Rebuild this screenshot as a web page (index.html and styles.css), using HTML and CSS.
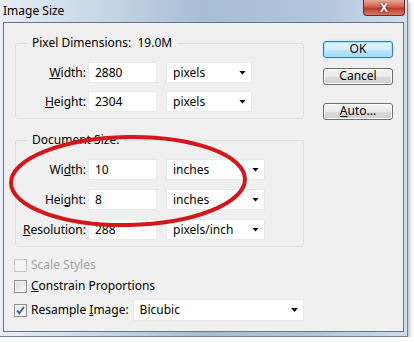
FILE: index.html
```html
<!DOCTYPE html>
<html lang="en">
<head>
  <meta charset="UTF-8" />
  <meta name="viewport" content="width=device-width, initial-scale=1.0" />
  <title>Image Size</title>
  <link rel="stylesheet" href="styles.css">
</head>
<body>
  <div class="window">
    <div class="titlebar">
      <span class="title">Image Size</span>
      <span class="close">X</span>
    </div>

    <div class="client">
      <div class="main">
        <fieldset class="group">
          <legend>Pixel Dimensions:&nbsp; 19.0M</legend>
          <div class="rows tight">
            <div class="row">
              <span class="lbl"><u>W</u>idth:</span>
              <span class="field">2880</span>
              <span class="dropdown short">pixels<i class="arrow"></i></span>
            </div>
            <div class="row">
              <span class="lbl"><u>H</u>eight:</span>
              <span class="field">2304</span>
              <span class="dropdown short">pixels<i class="arrow"></i></span>
            </div>
          </div>
        </fieldset>

        <fieldset class="group second">
          <legend>Document Size:</legend>
          <div class="rows">
            <div class="row">
              <span class="lbl">Wi<u>d</u>th:</span>
              <span class="field">10</span>
              <span class="dropdown">inches<i class="arrow"></i></span>
            </div>
            <div class="row">
              <span class="lbl">Hei<u>g</u>ht:</span>
              <span class="field">8</span>
              <span class="dropdown">inches<i class="arrow"></i></span>
            </div>
            <div class="row">
              <span class="lbl"><u>R</u>esolution:</span>
              <span class="field">288</span>
              <span class="dropdown">pixels/inch<i class="arrow"></i></span>
            </div>
          </div>
        </fieldset>

        <div class="check disabled first"><span class="box"></span>Scale Styles</div>
        <div class="check"><span class="box"></span><u>C</u>onstrain Proportions</div>
        <div class="check resample">
          <span class="box checked">
            <svg width="11" height="11" viewBox="0 0 11 11"><path d="M2 5.5 L4.3 8.2 L9 2" fill="none" stroke="#3d5a9c" stroke-width="1.8"/></svg>
          </span>
          <span class="resample-label">Resample <u>I</u>mage:</span>
          <span class="dropdown wide">Bicubic<i class="arrow"></i></span>
        </div>
      </div>

      <div class="buttons">
        <span class="btn default">OK</span>
        <span class="btn">Cancel</span>
        <span class="btn auto"><u>A</u>uto...</span>
      </div>
    </div>

    <svg class="markup" width="414" height="342" viewBox="0 0 414 342">
      <ellipse cx="128" cy="181" rx="117" ry="44" transform="rotate(-1 128 181)" fill="none" stroke="#d3171b" stroke-width="4"/>
    </svg>
  </div>
</body>
</html>
```

FILE: styles.css
```css
body {
  margin: 0;
  background: #fff;
  font-family: "Noto Sans", sans-serif;
  font-size: 12px;
  line-height: 16px;
  color: #000;
}

.window {
  position: relative;
  width: 408px;
  height: 337px;
  box-sizing: border-box;
  background: linear-gradient(to right, #e7eef6 0%, #cbd9e8 22%, #a7bdd3 50%, #b1c5da 78%, #d0dded 100%);
  border-right: 1px solid #71849a;
  border-bottom: 1px solid #71849a;
  box-shadow: 2px 2px 4px rgba(0, 0, 0, 0.25);
}

.titlebar {
  display: flex;
  height: 22px;
}

.title {
  padding: 3px 0 0 3px;
  color: #000;
}

.close {
  margin-left: auto;
  margin-right: 2px;
  width: 42px;
  height: 16px;
  box-sizing: border-box;
  border: 1px solid #6b2b22;
  border-top: none;
  border-radius: 0 0 4px 4px;
  background: linear-gradient(#e9a898, #d0604f 45%, #bd3a2a 55%, #d97a62);
  color: #fff;
  font-weight: bold;
  font-size: 12px;
  line-height: 15px;
  text-align: center;
  text-shadow: 0 0 2px #4a0e08, 0 0 1px #4a0e08;
}

.client {
  display: flex;
  width: 401px;
  height: 310px;
  margin-left: 3px;
  box-sizing: border-box;
  padding: 12px 0 0 11px;
  background: #f0f0f0;
  border: 1px solid #66778a;
}

.main {
  width: 289px;
}

.group {
  margin: 0;
  padding: 11px 0 6px 0;
  border: 1px solid #d5dfe5;
  border-radius: 3px;
}

.group legend {
  margin-left: 11px;
  padding: 0 5px;
}

.second {
  margin-top: 13px;
}

.rows {
  display: flex;
  flex-direction: column;
  gap: 9px;
}

.rows.tight {
  gap: 8px;
}

.row {
  display: flex;
  align-items: center;
  height: 21px;
}

.lbl {
  width: 70px;
  margin-right: 2px;
  text-align: right;
}

.field,
.dropdown {
  display: flex;
  align-items: center;
  height: 21px;
  box-sizing: border-box;
  padding-left: 6px;
  background: #fff;
  border: 1px solid #e9e9e9;
}

.field {
  width: 69px;
  margin-right: 9px;
}

.dropdown {
  width: 99px;
}

.dropdown.short {
  width: 86px;
}

.dropdown.wide {
  width: 172px;
  height: 22px;
}

.arrow {
  width: 7px;
  height: 4px;
  margin-left: auto;
  margin-right: 5px;
  background: #000;
  clip-path: polygon(0 0, 100% 0, 50% 100%);
}

.check {
  display: flex;
  align-items: center;
  height: 16px;
  margin: 5px 0 0 -1px;
}

.check.first {
  margin-top: 10px;
}

.check.resample {
  height: 22px;
}

.box {
  display: flex;
  align-items: center;
  justify-content: center;
  width: 13px;
  height: 13px;
  box-sizing: border-box;
  margin-right: 4px;
  border: 1px solid #8e8f8f;
  background: linear-gradient(135deg, #d9d9d9, #f9f9f9);
  box-shadow: inset 0 0 0 1px #f5f5f5;
}

.box.checked {
  background: linear-gradient(135deg, #e6e6e6, #fbfbfb);
}

.disabled {
  color: #a3a3a3;
}

.disabled .box {
  border-color: #c8c8c8;
  background: #f4f4f4;
}

.resample-label {
  width: 102px;
}

.buttons {
  display: flex;
  flex-direction: column;
  margin: 6px 0 0 19px;
}

.btn {
  width: 70px;
  height: 17px;
  box-sizing: border-box;
  border: 1px solid #707070;
  border-radius: 3px;
  background: linear-gradient(#f3f3f3, #ebebeb 50%, #dddddd 50%, #cfcfcf);
  box-shadow: inset 0 0 0 1px #fcfcfc;
  text-align: center;
  line-height: 14px;
}

.btn.default {
  border-color: #3c7fb1;
  background: linear-gradient(#e8f6fd, #d3eefb 50%, #bee6fd 50%, #a7d9f5);
  box-shadow: inset 0 0 0 1px #9ce3ff, 0 0 2px #8fd3f5;
}

.btn + .btn {
  margin-top: 10px;
}

.btn.auto {
  margin-top: 18px;
}

.markup {
  position: absolute;
  left: 0;
  top: 0;
  pointer-events: none;
}
```
